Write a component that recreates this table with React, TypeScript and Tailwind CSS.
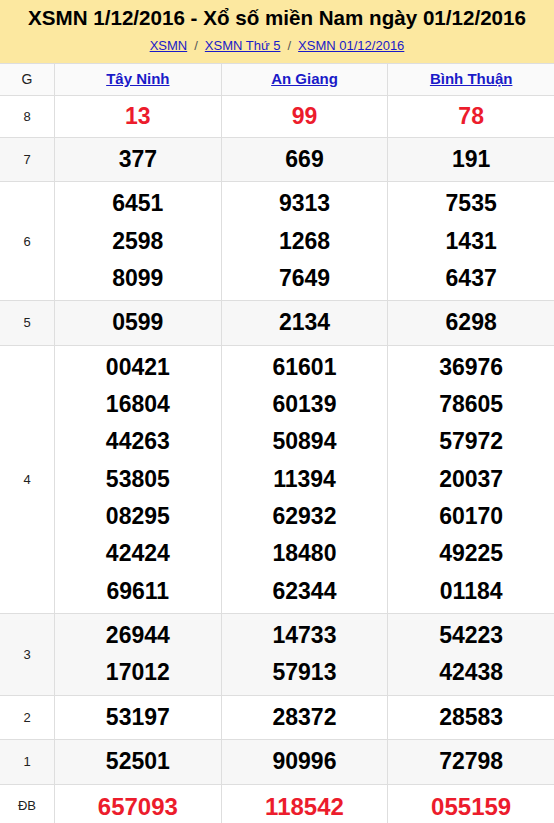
import React from "react";

type Row = { g: string; vals: string[][]; red?: boolean; alt?: boolean; kind?: "g8" | "db" };

const rows: Row[] = [
  { g: "8", vals: [["13"], ["99"], ["78"]], red: true, kind: "g8" },
  { g: "7", vals: [["377"], ["669"], ["191"]], alt: true },
  { g: "6", vals: [["6451", "2598", "8099"], ["9313", "1268", "7649"], ["7535", "1431", "6437"]] },
  { g: "5", vals: [["0599"], ["2134"], ["6298"]], alt: true },
  {
    g: "4",
    vals: [
      ["00421", "16804", "44263", "53805", "08295", "42424", "69611"],
      ["61601", "60139", "50894", "11394", "62932", "18480", "62344"],
      ["36976", "78605", "57972", "20037", "60170", "49225", "01184"],
    ],
  },
  { g: "3", vals: [["26944", "17012"], ["14733", "57913"], ["54223", "42438"]], alt: true },
  { g: "2", vals: [["53197"], ["28372"], ["28583"]] },
  { g: "1", vals: [["52501"], ["90996"], ["72798"]], alt: true },
  { g: "ĐB", vals: [["657093"], ["118542"], ["055159"]], red: true, kind: "db" },
];

export default function App() {
  return (
    <div className="w-[554px] bg-white" style={{ fontFamily: '"Liberation Sans", Arial, sans-serif' }}>
      <div className="bg-[#fce8a0] pb-[7px]">
        <div className="h-[36px] flex items-center justify-center text-[20.6px] font-bold text-black">
          XSMN 1/12/2016 - Xổ số miền Nam ngày 01/12/2016
        </div>
        <div className="h-[20px] flex items-center justify-center text-[13px] text-[#1a1ac8]">
          <a className="underline" href="#">XSMN</a>
          <span className="mx-[7px] text-[#555]">/</span>
          <a className="underline" href="#">XSMN Thứ 5</a>
          <span className="mx-[7px] text-[#555]">/</span>
          <a className="underline" href="#">XSMN 01/12/2016</a>
        </div>
      </div>
      <div className="grid grid-cols-[54px_1fr_1fr_1fr] border-t border-[#dedede] bg-[#fafafa] h-[32px]">
        <div className="flex items-center justify-center text-[14px] text-[#222]">G</div>
        {["Tây Ninh", "An Giang", "Bình Thuận"].map((p) => (
          <div key={p} className="border-l border-[#dedede] flex items-center justify-center">
            <a href="#" className="text-[15px] font-bold underline text-[#1a1ac8]">{p}</a>
          </div>
        ))}
      </div>
      {rows.map((r) => (
        <div
          key={r.g}
          className={`grid grid-cols-[54px_1fr_1fr_1fr] border-t border-[#dedede] ${r.alt ? "bg-[#f7f7f7]" : "bg-white"}`}
        >
          <div className="flex items-center justify-center text-[13px] text-[#222]">{r.g}</div>
          {r.vals.map((col, i) => (
            <div
              key={i}
              className={`border-l border-[#dedede] py-[3px] flex flex-col items-center justify-center font-bold ${
                r.red ? "text-[#ec1c2c]" : "text-black"
              } ${r.kind === "g8" ? "text-[23px] leading-[35px]" : r.kind === "db" ? "text-[24px] leading-[37.4px]" : "text-[23px] leading-[37.35px]"}`}
            >
              {col.map((n, j) => (
                <div key={j}>{n}</div>
              ))}
            </div>
          ))}
        </div>
      ))}
    </div>
  );
}
